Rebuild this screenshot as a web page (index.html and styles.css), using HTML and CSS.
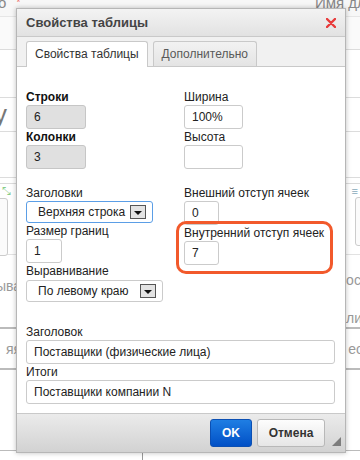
FILE: index.html
```html
<!DOCTYPE html>
<html lang="ru">
<head>
  <meta charset="UTF-8">
  <meta name="viewport" content="width=device-width, initial-scale=1.0">
  <title>Свойства таблицы</title>
  <link rel="stylesheet" href="styles.css">
</head>
<body>
  <!-- page behind the dialog -->
  <div class="page">
    <div class="row row-head">
      <span class="cut">о <span class="req">*</span></span>
      <span class="cut">Имя для</span>
    </div>
    <div class="row r-32"></div>
    <div class="row r-47"></div>
    <div class="row r-33"><span class="big">у</span><span></span></div>
    <div class="row r-45"></div>
    <div class="row r-6"></div>
    <div class="row r-tools">
      <div class="tool-icons"><span class="arrows">⤡</span><span class="doc">≡</span></div>
      <div class="tool-boxes"><span class="box box-left"></span><span class="box box-right"></span></div>
    </div>
    <div class="row r-72">
      <span class="faint low">ыва</span>
      <span class="faint-col"><span class="faint">осі</span><span class="faint">ли</span></span>
    </div>
    <div class="row r-40"><span class="faint">яя</span><span class="faint">ес</span></div>
    <div class="row r-84"></div>
    <div class="row r-last"><span class="vline"></span></div>
  </div>

  <div class="dialog">
    <div class="dialog-title">
      <span>Свойства таблицы</span>
      <svg class="close" width="10" height="10" viewBox="0 0 10 10">
        <path d="M1 1 L9 9 M9 1 L1 9" stroke="#e83a3a" stroke-width="2.4" stroke-linecap="round"/>
      </svg>
    </div>

    <div class="tabs">
      <div class="tab active">Свойства таблицы</div>
      <div class="tab">Дополнительно</div>
    </div>

    <div class="dialog-body">
      <div class="cols">
        <div class="group">
          <label class="bold">Строки</label>
          <input class="field disabled w60" type="text" value="6" readonly>
          <label class="bold">Колонки</label>
          <input class="field disabled w60" type="text" value="3" readonly>
        </div>
        <div class="group">
          <label>Ширина</label>
          <input class="field w59" type="text" value="100%">
          <label>Высота</label>
          <input class="field w59" type="text" value="">
        </div>
        <div class="group next">
          <label>Заголовки</label>
          <div class="select focused w127">
            <span>Верхняя строка</span>
            <span class="drop"></span>
          </div>
          <label>Размер границ</label>
          <input class="field w36" type="text" value="1">
          <label>Выравнивание</label>
          <div class="select w137">
            <span>По левому краю</span>
            <span class="drop"></span>
          </div>
        </div>
        <div class="group next">
          <label>Внешний отступ ячеек</label>
          <input class="field w35" type="text" value="0">
          <label>Внутренний отступ ячеек</label>
          <input class="field w35" type="text" value="7">
        </div>
      </div>

      <div class="group wide">
        <label>Заголовок</label>
        <input class="field" type="text" value="Поставщики (физические лица)">
        <label>Итоги</label>
        <input class="field" type="text" value="Поставщики компании N">
      </div>
    </div>

    <div class="dialog-footer">
      <button class="btn btn-ok">OK</button>
      <button class="btn btn-cancel">Отмена</button>
    </div>

    <span class="highlight"></span>
    <span class="grip"></span>
  </div>
</body>
</html>
```

FILE: styles.css
```css
body {
  margin: 0;
  background: #fff;
  font-family: "Liberation Sans", Arial, sans-serif;
  font-size: 12px;
  color: #222;
  overflow: hidden;
}

/* page behind */
.page {
  width: 360px;
  height: 460px;
  overflow: hidden;
}

.row {
  display: flex;
  justify-content: space-between;
  border-bottom: 1px solid #dcdcdc;
  color: #999;
}

.row-head {
  height: 16px;
  background: #f7f7f7;
  border-bottom-color: #e6e6e6;
  font-size: 15px;
  line-height: 10px;
  overflow: hidden;
}

.row-head .cut {
  margin-top: -2px;
  color: #888;
}

.row-head .cut:first-child {
  margin-left: -2px;
}

.row-head .cut:last-child {
  margin-right: -14px;
}

.req {
  color: #e66;
  font-size: 10px;
  vertical-align: top;
  margin-left: 6px;
}

.r-32 { height: 32px; background: #fafafa; }
.r-47 { height: 47px; }
.r-33 { height: 33px; }
.r-45 { height: 45px; }
.r-6 { height: 5px; }
.r-72 { height: 72px; border-bottom-color: #bbb; border-bottom-width: 2px; }
.r-40 { height: 39px; border-bottom-color: #bbb; border-bottom-width: 2px; }
.r-84 { height: 80px; border-bottom-color: #bbb; }
.r-last { height: 20px; border-bottom: none; }

.big {
  font-size: 26px;
  line-height: 32px;
  color: #777;
  margin-left: -6px;
}

.r-tools {
  height: 70px;
  flex-direction: column;
  border-bottom-color: #e2e2e2;
}

.tool-icons {
  display: flex;
  justify-content: space-between;
  height: 14px;
  font-size: 11px;
  line-height: 14px;
}

.arrows {
  color: #8c8;
  margin-left: 2px;
}

.doc {
  color: #8ab;
  margin-right: 2px;
}

.tool-boxes {
  display: flex;
  justify-content: space-between;
}

.box {
  display: block;
  border: 1px solid #ccc;
  border-radius: 3px;
  background: #fbfbfb;
}

.box-left {
  width: 26px;
  height: 56px;
  margin-left: -20px;
}

.box-right {
  width: 30px;
  height: 47px;
  margin-right: -27px;
  margin-top: -1px;
}

.faint {
  color: #999;
  font-size: 14px;
  line-height: 16px;
}

.low {
  margin-top: 23px;
  margin-left: -4px;
}

.faint-col {
  display: flex;
  flex-direction: column;
  gap: 22px;
  margin-top: 17px;
  margin-right: -4px;
}

.r-40 .faint {
  margin-top: 12px;
}

.r-40 .faint:first-child { margin-left: 6px; }
.r-40 .faint:last-child { margin-right: -3px; }

.vline {
  display: block;
  width: 1px;
  height: 20px;
  margin-left: 142px;
  background: #999;
}

/* dialog */
.dialog {
  position: absolute;
  left: 16px;
  top: 8px;
  width: 330px;
  box-sizing: border-box;
  border: 1px solid #b6b6b6;
  background: #fff;
  box-shadow: 0 0 5px rgba(0, 0, 0, 0.25);
}

.dialog-title {
  height: 28px;
  box-sizing: border-box;
  display: flex;
  align-items: center;
  justify-content: space-between;
  padding: 0 9px 0 9px;
  background: linear-gradient(#f3f3f3, #e2e2e2);
  border-bottom: 1px solid #c9c9c9;
  font-size: 13px;
  font-weight: bold;
  color: #444;
}

.tabs {
  display: flex;
  gap: 5px;
  height: 30px;
  box-sizing: border-box;
  padding: 4px 9px 0;
  background: #f1f1f1;
  border-bottom: 1px solid #c9c9c9;
}

.tab {
  height: 25px;
  box-sizing: border-box;
  padding: 0 8px;
  line-height: 24px;
  border: 1px solid #c9c9c9;
  border-bottom: none;
  border-radius: 3px 3px 0 0;
  background: linear-gradient(#f2f2f2, #e4e4e4);
  color: #595959;
  white-space: nowrap;
}

.tab.active {
  height: 26px;
  background: #fff;
  color: #333;
}

.dialog-body {
  padding: 22px 10px 9px 9px;
}

.cols {
  display: grid;
  grid-template-columns: 158px 1fr;
}

.group {
  display: flex;
  flex-direction: column;
  align-items: flex-start;
}

.group.next {
  margin-top: 16px;
}

.group.wide {
  margin-top: 22px;
  align-items: stretch;
}

label {
  display: block;
  line-height: 16px;
  color: #222;
  white-space: nowrap;
}

label.bold {
  font-weight: bold;
  color: #111;
}

.field {
  height: 24px;
  box-sizing: border-box;
  margin: 0;
  padding: 0 7px;
  border: 1px solid #cbcbcb;
  border-radius: 3px;
  background: #fff;
  font-family: "Liberation Sans", Arial, sans-serif;
  font-size: 12px;
  color: #222;
  outline: none;
}

.field.disabled {
  background: #e0e0e0;
  border-color: #c6c6c6;
}

.w60 { width: 60px; }
.w59 { width: 59px; }
.w36 { width: 36px; }
.w35 { width: 35px; }
.w127 { width: 127px; }
.w137 { width: 137px; }

.select {
  height: 22px;
  box-sizing: border-box;
  display: flex;
  align-items: center;
  justify-content: space-between;
  padding: 0 6px 0 11px;
  border: 1px solid #cbcbcb;
  border-radius: 3px;
  background: #fff;
  color: #222;
  white-space: nowrap;
}

.select.focused {
  border-color: #5b9ee6;
}

.select.w137 {
  margin-top: 1px;
}

.drop {
  width: 16px;
  height: 14px;
  box-sizing: border-box;
  border: 1px solid #555;
  background: #e3e3e3;
  display: flex;
  align-items: center;
  justify-content: center;
}

.drop::after {
  content: "";
  border-left: 4px solid transparent;
  border-right: 4px solid transparent;
  border-top: 4px solid #111;
  margin-top: 1px;
}

.dialog-footer {
  height: 39px;
  box-sizing: border-box;
  display: flex;
  justify-content: flex-end;
  align-items: flex-start;
  gap: 5px;
  padding: 5px 20px 0 0;
  border-top: 1px solid #c9c9c9;
  background: linear-gradient(#ebebeb, #d2d2d2);
}

.btn {
  height: 28px;
  margin: 0;
  border-radius: 3px;
  font-family: "Liberation Sans", Arial, sans-serif;
  font-size: 12px;
  font-weight: bold;
  cursor: pointer;
}

.btn-ok {
  width: 42px;
  border: 1px solid #0b4fb3;
  background: linear-gradient(#1f7ee3, #0150c6);
  color: #fff;
}

.btn-cancel {
  width: 68px;
  border: 1px solid #b8b8b8;
  background: linear-gradient(#fdfdfd, #e6e6e6);
  color: #333;
}

/* annotation over the padding fields */
.highlight {
  position: absolute;
  left: 159px;
  top: 212px;
  width: 157px;
  height: 53px;
  box-sizing: border-box;
  border: 3px solid #f2592b;
  border-radius: 10px;
}

.grip {
  position: absolute;
  right: 4px;
  bottom: 6px;
  width: 0;
  height: 0;
  border-left: 9px solid transparent;
  border-bottom: 9px solid #7d7d7d;
}
```
